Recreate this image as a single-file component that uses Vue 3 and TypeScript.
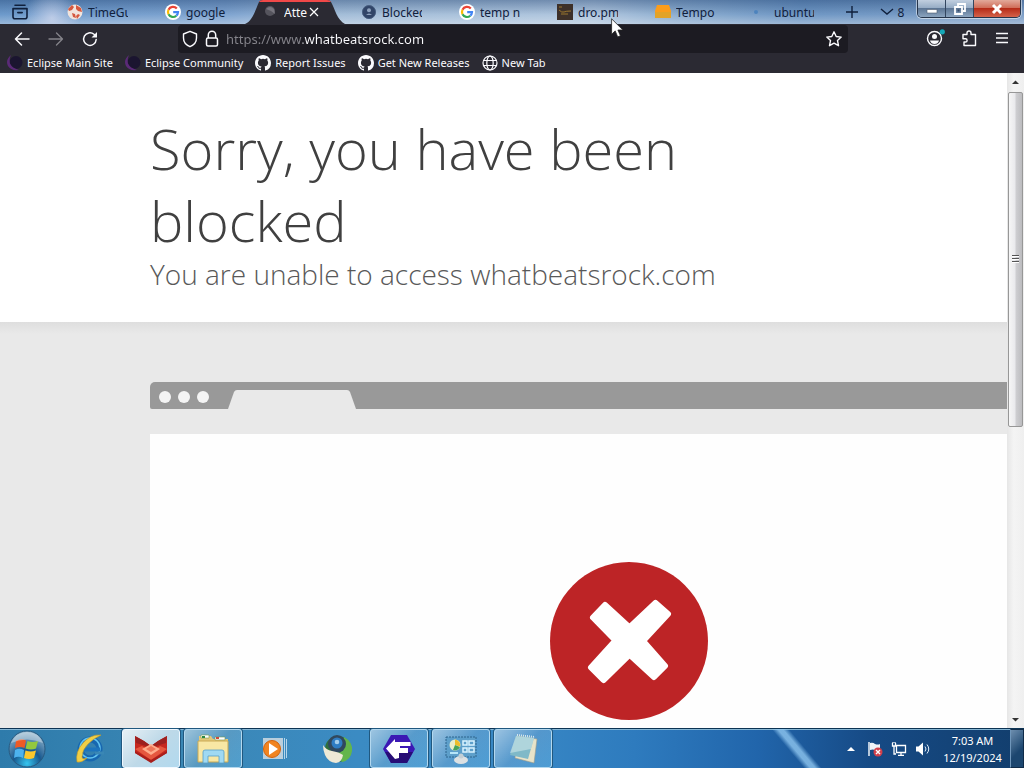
<script setup lang="ts">
import { ref } from 'vue'

interface Tab {
  icon: string
  label: string
}
interface Bookmark {
  icon: string
  label: string
}
interface Task {
  icon: string
  name: string
  state: '' | 'open' | 'current'
}

const tabs: Tab[] = [
  { icon: 'globe-red', label: 'TimeGu' },
  { icon: 'google', label: 'google' },
  { icon: 'planet', label: 'Atte' },
  { icon: 'shield', label: 'Blocked' },
  { icon: 'google', label: 'temp n' },
  { icon: 'dark', label: 'dro.pm' },
  { icon: 'box', label: 'Tempo' },
  { icon: 'dot', label: 'ubuntu' },
]
const current = ref(2)

const bookmarks: Bookmark[] = [
  { icon: 'moon', label: 'Eclipse Main Site' },
  { icon: 'moon', label: 'Eclipse Community' },
  { icon: 'cat', label: 'Report Issues' },
  { icon: 'cat', label: 'Get New Releases' },
  { icon: 'globe', label: 'New Tab' },
]

const tasks: Task[] = [
  { icon: 'ie', name: 'Internet Explorer', state: '' },
  { icon: 'fox', name: 'Browser', state: 'current' },
  { icon: 'files', name: 'Explorer', state: 'open' },
  { icon: 'player', name: 'Media Player', state: '' },
  { icon: 'bird', name: 'Mail', state: '' },
  { icon: 'hex', name: 'F', state: 'open' },
  { icon: 'panel', name: 'Control Panel', state: 'open' },
  { icon: 'note', name: 'Notepad', state: 'open' },
]

const address = ref('https://www.whatbeatsrock.com')
</script>

<template>
  <div class="desktop">
    <header class="tabstrip">
      <button class="recent" aria-label="Recent browsing">
        <svg width="18" height="18" viewBox="0 0 18 18" fill="none" stroke="#10203c" stroke-width="1.6" stroke-linecap="round" stroke-linejoin="round"><path d="M4 2.2h10M2 5.6h14v8.2a2 2 0 0 1-2 2H4a2 2 0 0 1-2-2zM6.8 9.6h4.4" /></svg>
      </button>
      <nav class="tabs" aria-label="Tabs">
        <div v-for="(tab, i) in tabs" :key="i" class="tab" :class="{ active: i === current }">
          <svg v-if="i === current" class="tab-shape" viewBox="0 0 98 24" preserveAspectRatio="none" aria-hidden="true">
            <path d="M-10 24C-2 21 1 8 4 2Q5 0 8 0H72Q75 0 76 2C80 9 82 20 90 24z" fill="#2b2a33" />
            <path d="M4 2Q5 0 8 0H72Q75 0 76 2z" fill="#f04848" />
          </svg>
          <button class="tab-button" @click="current = i">
            <svg class="favicon" width="16" height="16" viewBox="0 0 16 16" aria-hidden="true">
              <g v-if="tab.icon === 'globe-red'">
                <circle cx="8" cy="8" r="7.5" fill="#f1e4dd" />
                <path d="M1 5 5 1l2 2-2 3-3 1zM9 1l5 3 1 4-4-1-2-2zM5 9l3 1 1 4-3-1zM11 10l2 1-3 4-1-3z" fill="#d5583f" />
              </g>
              <g v-else-if="tab.icon === 'google'">
                <circle cx="8" cy="8" r="8" fill="#fff" />
                <g fill="none" stroke-width="2.2">
                  <path d="M11.8 4.6A5 5 0 0 0 3.5 5.8" stroke="#ea4335" />
                  <path d="M3.5 5.8a5 5 0 0 0 0 4.5" stroke="#fbbc05" />
                  <path d="M3.5 10.3a5 5 0 0 0 7.8 1.4" stroke="#34a853" />
                  <path d="M11.3 11.7A5 5 0 0 0 13 8.2H8.2" stroke="#4285f4" />
                </g>
              </g>
              <g v-else-if="tab.icon === 'planet'">
                <circle cx="7" cy="7" r="5" fill="#55545d" />
                <path d="M3 5q4-4 8 0l1 5-4-3z" fill="#77757e" />
              </g>
              <g v-else-if="tab.icon === 'shield'">
                <circle cx="8" cy="8" r="6.6" fill="#314568" stroke="#496082" />
                <circle cx="8" cy="6.3" r="2" fill="#8fa3bf" />
                <path d="M5 11q3-3 6 0z" fill="#8fa3bf" />
              </g>
              <g v-else-if="tab.icon === 'dark'">
                <path d="M0 0h16v16H0z" fill="#3d3029" />
                <path d="M2 6q3 3 5 2t7-1M4 10h7M2 3h3" fill="none" stroke="#9b762f" />
              </g>
              <g v-else-if="tab.icon === 'box'">
                <path d="M2 1h12l2 6v7H0V7z" fill="#fb9d1c" />
                <path d="M0 8h16v5q0 1-1 1H1q-1 0-1-1z" fill="#e2a329" />
              </g>
              <circle v-else cx="3" cy="8" r="2" fill="#4d83bd" />
            </svg>
            <span class="tab-label">{{ tab.label }}</span>
          </button>
          <button v-if="i === current" class="tab-close" aria-label="Close tab">
            <svg width="10" height="10" viewBox="0 0 10 10" stroke="#fff" stroke-width="1.2"><path d="M1 1l8 8M9 1 1 9" /></svg>
          </button>
        </div>
      </nav>
      <button class="strip-button" aria-label="New tab">
        <svg width="14" height="14" viewBox="0 0 14 14" stroke="#10203c" stroke-width="1.4"><path d="M7 1v12M1 7h12" /></svg>
      </button>
      <button class="strip-button all" aria-label="List all 8 tabs">
        <svg width="14" height="14" viewBox="0 0 14 14" fill="none" stroke="#10203c" stroke-width="1.4"><path d="m1 4 6 5 6-5" /></svg>
        <span>8</span>
      </button>
      <div class="window-buttons">
        <button class="win" aria-label="Minimize">
          <svg width="14" height="12" viewBox="0 0 14 12"><path d="M2 6.500h10v3.500H2z" fill="#fff" stroke="#4c5b70" stroke-width=".6" /></svg>
        </button>
        <button class="win" aria-label="Restore">
          <svg width="14" height="12" viewBox="0 0 14 12" fill="none" stroke="#fff" stroke-width="1.8"><path d="M5 3V1h7v7h-2M2 4h7v7H2z" /><path d="M4.500 7.500h2" stroke="#354a68" /></svg>
        </button>
        <button class="win close" aria-label="Close">
          <svg width="14" height="12" viewBox="0 0 14 12" stroke="#fff" stroke-width="3"><path d="m3 2 8 8M11 2l-8 8" /></svg>
        </button>
      </div>
    </header>

    <div class="toolbar">
      <div class="history">
        <button aria-label="Back"><svg width="16" height="16" viewBox="0 0 16 16" fill="none" stroke="#fbfbfe" stroke-width="1.5" stroke-linecap="round" stroke-linejoin="round"><path d="M15 8H1.500M7.500 2l-6 6 6 6" /></svg></button>
        <button aria-label="Forward"><svg width="16" height="16" viewBox="0 0 16 16" fill="none" stroke="#85848b" stroke-width="1.3" stroke-linecap="round" stroke-linejoin="round"><path d="M1 8h13.500M8.500 2l6 6-6 6" /></svg></button>
        <button aria-label="Reload"><svg width="16" height="16" viewBox="0 0 16 16" fill="none" stroke="#fbfbfe" stroke-width="1.5" stroke-linecap="round"><path d="M14.200 8.500A6.300 6.300 0 1 1 12 3.300L14 5" /><path d="M15 1v5.500H9.500z" fill="#fbfbfe" stroke="none" /></svg></button>
      </div>
      <div class="urlbar">
        <button aria-label="Tracking protection"><svg width="16" height="18" viewBox="0 0 16 18" fill="none" stroke="#fbfbfe" stroke-width="1.4" stroke-linejoin="round"><path d="M8 1.300 14.500 4v4c0 4-2.500 7-6.500 8.700C4 15 1.500 12 1.500 8V4z" /></svg></button>
        <button aria-label="Site information"><svg width="14" height="18" viewBox="0 0 14 18" fill="none" stroke="#fbfbfe" stroke-width="1.5" stroke-linejoin="round"><path d="M3.300 8V5a3.700 3.700 0 0 1 7.400 0v3" /><rect x="1.500" y="8" width="11" height="8" rx="1.500" /></svg></button>
        <input v-model="address" type="text" aria-label="Address" spellcheck="false" />
        <button aria-label="Bookmark this page"><svg width="18" height="18" viewBox="0 0 18 18" fill="none" stroke="#fbfbfe" stroke-width="1.4" stroke-linejoin="round"><path d="m9 1.800 2.200 4.700 5 .6-3.700 3.500 1 5.100L9 13.200l-4.500 2.500 1-5.100L1.800 7.100l5-.6z" /></svg></button>
      </div>
      <div class="actions">
        <button aria-label="Account">
          <svg width="20" height="20" viewBox="0 0 20 20"><circle cx="9.500" cy="9.500" r="7" fill="none" stroke="#fbfbfe" stroke-width="1.4" /><circle cx="9.500" cy="7.600" r="2.500" fill="#fbfbfe" /><path d="M5 11.500h9q-1 3.500-4.500 3.500T5 11.500" fill="#fbfbfe" /><circle cx="17.300" cy="2.800" r="2.600" fill="#15a8b8" /></svg>
        </button>
        <button aria-label="Extensions">
          <svg width="16" height="18" viewBox="0 0 16 18" fill="none" stroke="#fbfbfe" stroke-width="1.4" stroke-linejoin="round"><path d="M5 4.500V3a2 2 0 0 1 4 0v1.500h4.500v11H2V12h1.500a1.600 1.600 0 0 0 0-3.200H1V4.500z" /></svg>
        </button>
        <button aria-label="Menu"><svg width="14" height="14" viewBox="0 0 14 14" stroke="#fbfbfe" stroke-width="1.3"><path d="M1 1.500h12M1 6h12M1 10.500h12" /></svg></button>
      </div>
    </div>

    <nav class="bookmarks" aria-label="Bookmarks">
      <a v-for="(mark, i) in bookmarks" :key="i" href="#">
        <svg width="16" height="16" viewBox="0 0 16 16" aria-hidden="true">
          <g v-if="mark.icon === 'moon'">
            <circle cx="9" cy="7.500" r="6.500" fill="#1b1530" />
            <path d="M4 0Q-2 5 1 11q3 5 11 4Q5 13 3 8.500 2 4 4 0" fill="#5b2a78" />
          </g>
          <path v-else-if="mark.icon === 'cat'" fill="#fbfbfe" d="M8 0C3.580 0 0 3.580 0 8c0 3.540 2.290 6.530 5.470 7.590.4.070.55-.17.55-.38 0-.19-.01-.82-.01-1.490-2.010.37-2.530-.49-2.690-.94-.09-.23-.48-.94-.82-1.130-.28-.15-.68-.52-.01-.53.63-.01 1.080.58 1.230.82.72 1.210 1.870.87 2.330.66.07-.52.28-.87.51-1.070-1.780-.2-3.640-.89-3.640-3.950 0-.87.31-1.590.82-2.150-.08-.2-.36-1.020.08-2.120 0 0 .67-.21 2.200.82a7.600 7.600 0 0 1 4 0c1.530-1.040 2.200-.82 2.200-.82.44 1.100.16 1.920.08 2.120.51.56.82 1.270.82 2.150 0 3.070-1.870 3.750-3.650 3.950.29.25.54.73.54 1.480 0 1.070-.01 1.930-.01 2.200 0 .21.15.46.55.38A8 8 0 0 0 16 8c0-4.420-3.580-8-8-8" />
          <g v-else fill="none" stroke="#fbfbfe" stroke-width="1.2">
            <circle cx="8" cy="8" r="7" />
            <ellipse cx="8" cy="8" rx="3.200" ry="7" />
            <path d="M1.500 5.500h13M1.500 10.500h13" />
          </g>
        </svg>
        <span>{{ mark.label }}</span>
      </a>
    </nav>

    <div class="viewport">
      <main class="page">
        <section class="hero">
          <h1>Sorry, you have been blocked</h1>
          <h2>You are unable to access whatbeatsrock.com</h2>
        </section>
        <section class="shot">
          <div class="mock-bar">
            <i></i><i></i><i></i>
            <svg width="128" height="19" viewBox="0 0 128 19" aria-hidden="true"><path d="M0 19 6 2Q7 0 9 0H119Q121 0 122 2L128 19z" fill="#e9e9e9" /></svg>
          </div>
          <div class="mock-body">
            <svg width="160" height="160" viewBox="0 0 160 160" role="img" aria-label="Blocked">
              <circle cx="80" cy="80" r="79" fill="#bd2426" />
              <path d="M44 56.500 56 44 80.500 66.500 106.500 42 119 53 94 80 116 105 105 116 80.500 93.500 54.500 119 42 106.500 66.500 79.500z" fill="#fff" stroke="#fff" stroke-width="6" stroke-linejoin="round" />
            </svg>
          </div>
        </section>
      </main>
      <div class="scrollbar" aria-hidden="true">
        <svg width="17" height="18" viewBox="0 0 17 18"><path d="M5 11 8.500 7.500 12 11z" fill="#333" /></svg>
        <div class="track"><div class="thumb"><b></b><b></b><b></b></div></div>
        <svg width="17" height="17" viewBox="0 0 17 17"><path d="M5 7 8.500 10.500 12 7z" fill="#333" /></svg>
      </div>
    </div>

    <footer class="taskbar">
      <button class="start" aria-label="Start">
        <svg width="40" height="40" viewBox="0 0 40 40">
          <defs>
            <radialGradient id="orb" cx=".5" cy=".9" r=".85"><stop offset="0" stop-color="#35c5ef" /><stop offset=".45" stop-color="#17588f" /><stop offset="1" stop-color="#8fb3cb" /></radialGradient>
          </defs>
          <circle cx="20" cy="20" r="18" fill="url(#orb)" stroke="#285a80" />
          <path d="M9 12q5-3 10-.500L17.500 19Q13 17 8 19z" fill="#ee5a25" />
          <path d="M20.500 12q5 2 10.500 0L29 19.500q-5 2-10.500 0z" fill="#93c83e" />
          <path d="M8 21q4.500-2.500 9 0L16 29q-4.500-2.500-9 0z" fill="#4db2ee" />
          <path d="M18.500 21.500q5 2 10.500 0L27 29q-5 2-10 0z" fill="#fcc72c" />
          <path d="M4 14Q9 3 20 3t16 11Q20 7 4 14" fill="#fff" opacity=".35" />
        </svg>
      </button>
      <div class="tasks">
        <button v-for="task in tasks" :key="task.name" class="task" :class="task.state" :aria-label="task.name">
          <svg width="36" height="34" viewBox="0 0 36 34" aria-hidden="true">
            <g v-if="task.icon === 'ie'">
              <circle cx="19" cy="17" r="9.500" fill="none" stroke="#1767b0" stroke-width="6" />
              <circle cx="19" cy="16" r="10" fill="none" stroke="#61c4f1" stroke-width="1.5" />
              <path d="M11 15.500h18v4H11z" fill="#1d74bd" />
              <path d="M24 19.500h9v3h-9z" fill="#3a87b5" />
              <path d="M30 3Q20 2 12 11T6 30q5 1 10-4-5 2-5-1 0-7 6-13T30 3" fill="#f1cf46" stroke="#c99b21" stroke-width=".6" />
            </g>
            <g v-else-if="task.icon === 'fox'">
              <path d="m2 4 9 5 7 5 7-5 9-5v17L18 30 2 21z" fill="#c6281f" />
              <path d="m2 4 9 5 7 5 7-5 9-5-1 7-10 3-5 4-5-4-10-3z" fill="#9c2120" />
              <path d="m2 17 7-3 9 6 9-6 7 3-16 11z" fill="#e5573f" />
              <path d="m9 17 9-5 9 5-9 6z" fill="#ffab8b" />
              <path d="m13 17 5-3 5 3-5 3z" fill="#ee7458" />
              <path d="m2 19 16 9 16-9v2L18 31 2 21z" fill="#a81e1b" />
            </g>
            <g v-else-if="task.icon === 'files'">
              <path d="M4 4h12l2 3h15v20H4z" fill="#e3c878" />
              <path d="M6 3h8v3H6zM20 5h10v3H20z" fill="#fff" stroke="#779b50" stroke-width=".6" />
              <path d="M3 9h30v21H3z" fill="#f8e7a4" stroke="#c9a955" />
              <path d="M8 31V20q0-2 2-2h17q2 0 2 2v11h-5v-7H13v7z" fill="#a0d9f2" stroke="#579fc8" stroke-width=".8" />
              <path d="M7 5h3" stroke="#2b8841" stroke-width="2" /><path d="M21 6h3" stroke="#cf4b38" stroke-width="2" />
            </g>
            <g v-else-if="task.icon === 'player'">
              <path d="M6 6h20v21H6z" fill="#b9cfdd" /><path d="M27 6h1v21h-1zM29 7h1v19h-1z" fill="#b5d6eb" />
              <circle cx="15" cy="17" r="8.500" fill="#f18420" stroke="#d3630c" /><path d="m12 11 9 6-9 6z" fill="#fff" />
            </g>
            <g v-else-if="task.icon === 'bird'">
              <circle cx="19" cy="17" r="13" fill="#2f6f3c" />
              <path d="M25 5q9 5 8 14T23 30L17 20z" fill="#63b64b" />
              <circle cx="18" cy="12" r="9" fill="#31485d" /><circle cx="18" cy="11" r="5.500" fill="#2f7cc2" /><circle cx="18" cy="10" r="2.300" fill="#a4cce9" />
              <path d="M4 13q3 5 9 6 7 1 11 4-1 7-7 8-8-1-11-8-2-5-2-10" fill="#eee9d6" />
            </g>
            <g v-else-if="task.icon === 'hex'">
              <path d="M10 3h16l8 14-8 14H10L2 17z" fill="#3b18b4" /><path d="M4 20h28l-6 11H10z" fill="#270d76" />
              <path d="M5 16.500 14 7v3h15.500v4H19v2h8v5h-9v5l-4 1z" fill="#fff" />
            </g>
            <g v-else-if="task.icon === 'panel'">
              <path d="M3 5h30v20H3z" fill="#5d9fca" stroke="#2e648d" stroke-dasharray="2 1" />
              <circle cx="12" cy="13" r="5.500" fill="#e9edcb" /><path d="M12 13V7.500a5.500 5.500 0 0 1 5 7z" fill="#edbd2b" /><path d="m12 13 5 2a5.500 5.500 0 0 1-7 3z" fill="#47a35a" />
              <path d="M20 9h4v4h-4zM26 9h5v4h-5zM20 16h4v4h-4zM26 16h5v4h-5z" fill="none" stroke="#d9f4ff" stroke-width="1.5" />
              <path d="M7 21h8" stroke="#b6e5f9" stroke-width="2" /><ellipse cx="18" cy="28" rx="7" ry="4" fill="#dce1e3" /><circle cx="18" cy="24" r="2.500" fill="#c3cfd5" />
            </g>
            <g v-else>
              <path d="m12 4 20 3-3 24-19-5z" fill="#e7e3c9" stroke="#9c9b89" stroke-width=".6" />
              <path d="m11 4 18 2-6 21-18-4z" fill="#7fb9c8" /><path d="m11 4 18 2-3 11L5 21z" fill="#c9e3e7" opacity=".65" />
              <path d="m12 3 18 2" stroke="#dae9ec" stroke-width="2" stroke-dasharray="1 1" />
            </g>
          </svg>
        </button>
      </div>
      <div class="glass" aria-hidden="true"></div>
      <div class="tray">
        <button aria-label="Show hidden icons"><svg width="16" height="16" viewBox="0 0 16 16"><path d="m4 10 4-4 4 4z" fill="#fff" /></svg></button>
        <button aria-label="Action Center">
          <svg width="16" height="16" viewBox="0 0 16 16"><path d="M2 1v14" stroke="#fff" stroke-width="1.4" /><path d="M3 2q3-1 5 1 3 1 5 0v7q-3 1-5-1-2-1-5 0z" fill="#f1f4f8" /><circle cx="11" cy="11" r="4.500" fill="#d2404b" /><path d="m9 9 4 4M13 9l-4 4" stroke="#fff" stroke-width="1.4" /></svg>
        </button>
        <button aria-label="Network">
          <svg width="16" height="16" viewBox="0 0 16 16" fill="none" stroke="#fff" stroke-width="1.3"><path d="M5.500 4.500h9v7h-9zM10 12v2M7 14.300h6M1.500 2v3h3V2M3 5v8h2M2 1v1M4 1v1" /></svg>
        </button>
        <button aria-label="Volume">
          <svg width="16" height="16" viewBox="0 0 16 16"><path d="M1 5.500h2.500L8 1.500v13L3.500 10.500H1z" fill="#fff" /><path d="M10 5.500q2 2.500 0 5M12 3.500q3.500 4.500 0 9" fill="none" stroke="#e3effb" /></svg>
        </button>
      </div>
      <button class="clock"><time>7:03 AM</time><time>12/19/2024</time></button>
      <button class="show-desktop" aria-label="Show desktop"></button>
    </footer>

    <svg class="pointer" width="13" height="20" viewBox="0 0 13 20" aria-hidden="true"><path d="M.6.800v15.500l3.600-3.400 2.500 6 2.700-1.200-2.500-5.700h5z" fill="#fff" stroke="#222" stroke-width=".8" /></svg>
  </div>
</template>

<style>
html,
body {
  overflow: hidden;
}
</style>

<style scoped>
* {
  box-sizing: border-box;
}
.desktop {
  position: relative;
  display: flex;
  flex-direction: column;
  height: 100vh;
  overflow: hidden;
  font-family: "Noto Sans", "Open Sans", sans-serif;
  font-size: 12px;
  background: #fff;
}
button {
  display: flex;
  align-items: center;
  justify-content: center;
  padding: 0;
  border: 0;
  background: none;
  font: inherit;
  color: inherit;
}
svg {
  flex: none;
}

.tabstrip {
  display: flex;
  align-items: stretch;
  flex: none;
  height: 24px;
  color: #10203c;
  background:
    radial-gradient(circle at 52px 18px, rgba(215, 220, 240, 0.7), transparent 28px),
    linear-gradient(to bottom, rgba(20, 55, 105, 0.4), transparent 60%, rgba(255, 255, 255, 0.3)),
    linear-gradient(to right, #6d9acb, #7fa4d0 22%, #a3bdd8 32%, #b0c6de 58%, #8eaed0 66%, #6f97c4 78%, #7d9ec6);
}
.recent {
  width: 40px;
}
.tabs {
  display: flex;
  flex: 1;
  max-width: 784px;
  margin-left: 19px;
}
.tab {
  position: relative;
  display: flex;
  align-items: center;
  flex: 1;
  min-width: 0;
}
.tab-shape {
  position: absolute;
  inset: 0;
  width: 100%;
  height: 100%;
  overflow: visible;
}
.tab-button {
  position: relative;
  gap: 5px;
  padding-left: 8px;
  min-width: 0;
  height: 24px;
}
.tab-label {
  width: 40px;
  overflow: hidden;
  white-space: nowrap;
  text-align: left;
}
.tab.active {
  color: #fbfbfe;
}
.tab.active .tab-label {
  width: 24px;
}
.tab-close {
  position: relative;
  width: 12px;
  height: 24px;
}
.strip-button {
  width: 18px;
}
.strip-button.all {
  gap: 4px;
  width: 26px;
  margin: 0 12px 0 18px;
}
.window-buttons {
  display: flex;
  height: 18px;
  margin-right: 3px;
  border: 1px solid #26354b;
  border-top: 0;
  border-radius: 0 0 5px 5px;
  overflow: hidden;
  box-shadow: 0 0 0 1px rgba(255, 255, 255, 0.5);
}
.win {
  width: 28px;
  border-right: 1px solid #33465f;
  background: linear-gradient(#c1cfdf, #95abc4 48%, #5d7694 50%, #8ba4bf);
}
.win.close {
  width: 46px;
  border-right: 0;
  background: linear-gradient(#e2a99a, #cf6b56 48%, #b62c18 50%, #d4624a);
}

.toolbar {
  display: flex;
  align-items: center;
  flex: none;
  height: 29px;
  background: #2b2a33;
}
.history {
  display: flex;
  flex: none;
  width: 178px;
  gap: 18px;
  padding-left: 14px;
}
.urlbar {
  display: flex;
  align-items: center;
  flex: 1;
  height: 28px;
  padding: 0 5px 0 4px;
  gap: 7px;
  border-radius: 4px;
  background: #1c1b22;
}
.urlbar input {
  flex: 1;
  min-width: 0;
  height: 24px;
  padding: 0;
  border: 0;
  outline: 0;
  font: inherit;
  font-size: 13px;
  color: transparent;
  background: linear-gradient(to right, #85848b 77px, #fbfbfe 77px);
  background-clip: text;
}
.actions {
  display: flex;
  align-items: center;
  flex: none;
  width: 176px;
  justify-content: flex-end;
  gap: 17px;
  padding-right: 15px;
}

.bookmarks {
  display: flex;
  align-items: center;
  flex: none;
  gap: 12px;
  height: 20px;
  padding: 0 7px 1px;
  background: #2b2a33;
  font-size: 11px;
}
.bookmarks a {
  display: flex;
  align-items: center;
  gap: 4px;
  color: #fbfbfe;
  text-decoration: none;
  white-space: nowrap;
}

.viewport {
  display: flex;
  flex: 1;
  min-height: 0;
}
.page {
  flex: 1;
  min-width: 0;
  overflow: hidden;
  background: #e9e9e9;
}
.hero {
  padding: 39px 260px 30px 150px;
  background: #fff;
  color: #404040;
  font-family: "Open Sans", "Noto Sans", sans-serif;
}
h1,
h2 {
  margin: 0;
  font-weight: 300;
}
h1 {
  font-size: 56px;
  line-height: 72px;
}
h2 {
  font-size: 28px;
  line-height: 36px;
  color: #595959;
  white-space: nowrap;
}
.shot {
  padding: 60px 0 0 150px;
  background: linear-gradient(#dedede, #e9e9e9 12px);
}
.mock-bar {
  display: flex;
  align-items: center;
  gap: 7px;
  height: 27px;
  padding: 2px 9px 0;
  border-radius: 5px 0 0 2px;
  background: #999;
}
.mock-bar i {
  width: 12px;
  height: 12px;
  border-radius: 50%;
  background: #f4f4f4;
}
.mock-bar svg {
  align-self: flex-end;
  margin-left: 12px;
}
.mock-body {
  display: flex;
  justify-content: center;
  height: 450px;
  margin-top: 25px;
  padding: 127px 0 0 101px;
  background: #fefefe;
}
.scrollbar {
  display: flex;
  flex-direction: column;
  flex: none;
  width: 17px;
  background: linear-gradient(to right, #e6e6e6, #f4f4f4 40%, #efefef);
}
.track {
  flex: 1;
}
.thumb {
  display: flex;
  flex-direction: column;
  align-items: center;
  justify-content: center;
  gap: 1px;
  height: 54%;
  margin: 1px;
  border: 1px solid #979797;
  border-radius: 2px;
  background: linear-gradient(to right, #f6f6f6, #e9e9ec 48%, #cfcfd2 52%, #bcbcbf);
}
.thumb b {
  width: 7px;
  height: 2px;
  border-top: 1px solid #555;
  background: #fff;
}

.taskbar {
  display: flex;
  align-items: stretch;
  flex: none;
  height: 40px;
  border-top: 1px solid #0c3353;
  box-shadow: inset 0 1px 0 #86b7d5;
  color: #fff;
  background: linear-gradient(to right, #2e7bab, #3a87b5 18%, #3b8bc3 35%, #3786c4 52%, #2e7bbe 62%, #2165ab 74%, #164a85 85%, #123e6d);
}
.start {
  width: 54px;
}
.tasks {
  display: flex;
  gap: 4px;
  margin-left: 6px;
}
.task {
  width: 58px;
  border: 1px solid transparent;
  border-radius: 3px;
}
.task.open {
  border-color: #b3d8ef;
  box-shadow: 0 0 0 1px #20587f;
  background: linear-gradient(135deg, rgba(255, 255, 255, 0.5), rgba(255, 255, 255, 0.15) 50%, rgba(130, 210, 250, 0.3));
}
.task.current {
  border-color: #f0f8ff;
  box-shadow: 0 0 0 1px #20587f;
  background: linear-gradient(135deg, #e7f0f5, #bed9e8 50%, #b2d9ee);
}
.glass {
  flex: 1;
  margin-left: 198px;
  background: linear-gradient(50deg, transparent 43%, rgba(150, 205, 245, 0.75) 48%, rgba(150, 205, 245, 0.75) 52%, transparent 57%);
}
.tray {
  display: flex;
  align-items: center;
  gap: 8px;
  margin-right: 4px;
}
.clock {
  flex-direction: column;
  width: 75px;
  font-size: 11px;
  line-height: 17px;
}
.show-desktop {
  width: 14px;
  border: 1px solid #0f2b48;
  border-left-color: #6f96ba;
  background: linear-gradient(135deg, #6d8eae, #1c466f 60%);
}
.pointer {
  position: absolute;
  left: 611px;
  top: 18px;
}
</style>
